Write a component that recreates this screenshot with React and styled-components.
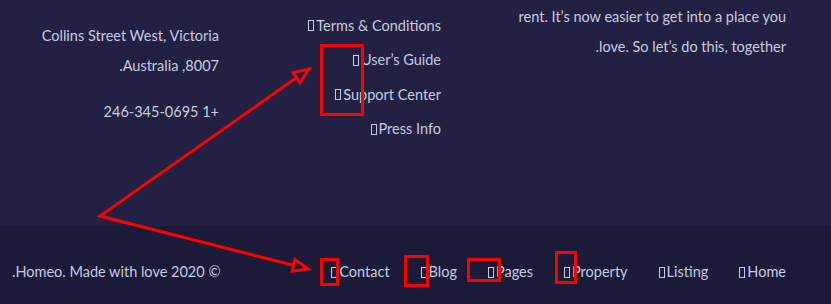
import styled, { createGlobalStyle } from "styled-components";

const GlobalStyle = createGlobalStyle`
  html, body {
    margin: 0;
    padding: 0;
    background: #1b1a38;
  }
  body {
    font-family: "Lato", "Noto Sans", sans-serif;
    -webkit-font-smoothing: antialiased;
  }
`;

const aboutLines = [
  "rent. It\u2019s now easier to get into a place you",
  ".love. So let\u2019s do this, together",
];
const usefulLinks = ["Terms & Conditions", "User\u2019s Guide", "Support Center", "Press Info"];
const navLinks = ["Contact", "Blog", "Pages", "Property", "Listing", "Home"];

export default function App() {
  return (
    <Page>
      <GlobalStyle />
      <Top>
        <Column $top={21}>
          <Line>Collins Street West, Victoria</Line>
          <Line>.Australia ,8007</Line>
          <Line $gap={16}>246-345-0695 1+</Line>
        </Column>
        <Column $top={8}>
          {usefulLinks.map((l) => (
            <LinkLine key={l}>
              <Tofu />
              {l}
            </LinkLine>
          ))}
        </Column>
        <Column $top={2}>
          {aboutLines.map((l) => (
            <Line key={l}>{l}</Line>
          ))}
        </Column>
      </Top>
      <Bottom>
        <Copy>.Homeo. Made with love 2020 &copy;</Copy>
        <Nav>
          {navLinks.map((l) => (
            <NavItem key={l}>
              <Tofu />
              {l}
            </NavItem>
          ))}
        </Nav>
      </Bottom>
      <Marks viewBox="0 0 831 304" width="831" height="304">
        <g fill="none" stroke="#ff0000" strokeWidth="3">
          <rect x="321.5" y="45.5" width="41" height="69" />
          <rect x="321.5" y="259.5" width="16" height="25" />
          <rect x="405.5" y="256.5" width="22" height="29" />
          <rect x="468.5" y="259.5" width="31" height="21" />
          <rect x="556.5" y="252.5" width="19" height="30" />
          <polyline points="296.7,77.6 100,216 293.5,265.3" strokeLinejoin="miter" />
          <polygon points="309,69 300.1,82.5 293.2,72.7" />
          <polygon points="308,269 292,271.1 295,259.5" />
        </g>
      </Marks>
    </Page>
  );
}

const Page = styled.div`
  position: relative;
  width: 831px;
  height: 304px;
  overflow: hidden;
  color: #c6cbe0;
  font-size: 14.5px;
`;

const Top = styled.div`
  height: 226px;
  background: #222143;
  display: grid;
  grid-template-columns: 219px 222px 345px;
  padding-right: 45px;
  box-sizing: border-box;
`;

const Column = styled.div`
  display: flex;
  flex-direction: column;
  align-items: flex-end;
  padding-top: ${(p) => p.$top}px;
`;

const Line = styled.div`
  line-height: 30px;
  white-space: nowrap;
  margin-top: ${(p) => p.$gap || 0}px;
`;

const LinkLine = styled.div`
  display: flex;
  align-items: center;
  height: 34.5px;
  white-space: nowrap;
`;

const Tofu = styled.span`
  display: inline-block;
  width: 4px;
  height: 9px;
  border: 1px solid #c6cbe0;
  margin: 1px 2px 0 1px;
`;

const Bottom = styled.div`
  height: 78px;
  background: #1b1a38;
  display: flex;
  justify-content: space-between;
  align-items: flex-start;
  padding: 36px 45px 0 12px;
  box-sizing: border-box;
`;

const Copy = styled.div`
  line-height: 20px;
  white-space: nowrap;
`;

const Nav = styled.div`
  display: flex;
  gap: 30px;
`;

const NavItem = styled.div`
  display: flex;
  align-items: center;
  line-height: 20px;
  white-space: nowrap;
`;

const Marks = styled.svg`
  position: absolute;
  left: 0;
  top: 0;
  pointer-events: none;
`;
